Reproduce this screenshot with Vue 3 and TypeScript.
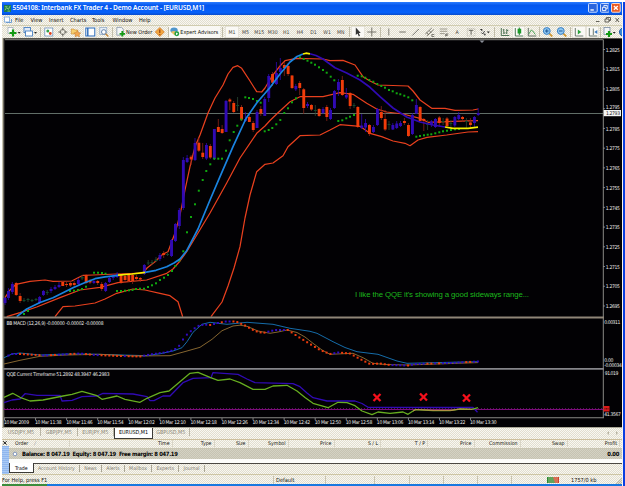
<script setup lang="ts">
type Pt = [number, number]

const menus = ['File', 'View', 'Insert', 'Charts', 'Tools', 'Window', 'Help']
const periods = ['M1', 'M5', 'M15', 'M30', 'H1', 'H4', 'D1', 'W1', 'MN']
const chartTabs = ['USDJPY,M5', 'GBPJPY,M5', 'EURJPY,M5', 'EURUSD,M1', 'GBPUSD,M5']
const terminalTabs = ['Trade', 'Account History', 'News', 'Alerts', 'Mailbox', 'Experts', 'Journal']
const columns = ['Time', 'Type', 'Size', 'Symbol', 'Price', 'S / L', 'T / P', 'Price', 'Commission', 'Swap', 'Profit']

// The 1.2795 label sits slightly higher so that it clears the current price box.
const prices = Array.from({ length: 14 }, (_, i) => ({
  y: 50 + i * 19.73,
  shift: i === 3 ? 0.2 : 1.7,
  label: (1.2825 - i * 0.001).toFixed(4),
}))
const times = ['10 Mar 2009', '11:38', '11:46', '11:54', '12:02', '12:10', '12:18', '12:26', '12:34', '12:42', '12:50', '12:58', '13:06', '13:14', '13:22', '13:30'].map(
  (t, i) => ({ x: 4 + i * 31.07, label: i ? '10 Mar ' + t : t }),
)

const upper = '5,297.7 10,290 16,284.3 30,281.3 45,280 53,281.3 71.7,281 78,277.7 83,275.3 93,275 116.7,274 143,273 147,268 155,261.7 163,254 168,251.7 175,233 180,215 185,190 190,166.7 195,146.7 200,135 208,113 215,98 223,85 228,74 233,67.3 237.7,65.7 241.7,68.3 250,81 256.7,91.7 261.7,92 265,88 271.7,76.7 280,66 285,60.7 296.7,58.3 323,59 330,60.7 343,60.3 355,65 363,76.7 370,81 378,85 408,86 413,91 420,100 431.7,108.3 445,108.3 455,110.3 473,110 478,109'
const middle = '6.7,316.7 20,312.7 36.7,307 60,297.7 80,290 100,287.3 118,282.7 146.7,280 166.7,273.3 173,269 180,261 186.7,251.7 198,233 210,213 226.7,183 240,158 256.7,133.3 265,126 270,120.5 278,112.7 290,101.7 300,96.7 323,96.7 340,92.7 353,94.3 366.7,103.3 376.7,109 386.7,112 403,114 420,118.3 428,122.3 453,121.3 478,120.7'
const lowerA = '55,316.7 63,306.7 75,306 95,303 105,299 116.7,293.3 133,289 145,290 160,293.3 170,295.7 178,301.7 182.7,316.7'
const lowerB = '211,316.7 222,302 228,286 234,268 240,246.7 245,218 250,195 256.7,171.7 265,164.3 273,163 283,155.7 288,146.7 300,135.7 320,135 330,130 340,124.7 360,126.3 370,133.3 381.7,136.7 393,141 405,143.3 410,145.7 418,140 427,137.3 446.7,135 468,132 478,131.7'

// x, body top, body bottom, direction (1 up, 0 down, 2 doji), wick top, wick bottom
const candles: number[][] = [
  [5, 298, 303, 1, 297, 305], [8.4, 291, 298, 1, 288, 300], [12.3, 284, 292, 1, 282, 294], [16.2, 283, 295, 0, 282, 296],
  [20.1, 296, 301, 0, 293, 303], [24, 300, 301, 2, 298, 302], [28, 299, 300, 2, 298, 302], [32, 300, 301, 2, 299, 302],
  [36, 299, 300, 2, 298, 301], [39.6, 297, 303, 1, 296, 304], [43.4, 291, 295, 1, 290, 296], [47.2, 292, 293, 2, 290, 295],
  [51, 289, 291, 1, 287, 293], [55, 287, 289, 1, 285, 290], [59, 285, 287, 1, 282, 288], [62.7, 282, 286, 0, 281, 286],
  [66.5, 284, 285, 0, 282, 287], [70.4, 283, 285.5, 0, 281, 287], [74.2, 283, 285, 0, 281, 287], [78.3, 280, 284, 1, 278, 285],
  [82.1, 277, 278.5, 2, 275, 280], [86.1, 275, 283, 0, 274, 284], [90, 281, 282.5, 0, 279, 284], [93.9, 281, 283, 1, 279, 284],
  [97.7, 281, 283, 0, 280, 285], [101.7, 284, 289, 0, 282, 291], [105.6, 283, 291, 1, 282, 292], [109.4, 278, 282, 1, 276, 283],
  [113.2, 276.5, 278, 1, 274, 280], [117.1, 274, 277, 1, 272, 278], [121, 275, 283, 0, 273, 284], [125, 276, 280, 0, 275, 283],
  [128.8, 275, 281, 0, 274, 282], [132.6, 275, 281, 0, 274, 284], [136.4, 277, 279, 0, 275, 281], [140.3, 278, 279.5, 0, 277, 282],
  [144.3, 265, 274, 1, 264, 275], [148.2, 262.5, 263.5, 2, 260, 265], [152, 262, 263, 2, 260, 265], [156, 259.5, 261, 2, 257, 262],
  [159.9, 255, 259, 1, 253, 261], [163.7, 253, 255, 0, 251, 258], [167.6, 254, 255, 2, 252, 256], [171.5, 240, 256, 1, 239, 257],
  [175.4, 224, 241, 1, 223, 242], [179.3, 210, 226, 1, 208, 229], [183.3, 160, 208, 1, 157, 210], [187.1, 158, 162, 1, 155, 163],
  [191.1, 156.7, 159.5, 0, 155, 165], [195, 143, 160, 1, 138, 161], [198.8, 142.7, 150.7, 0, 138, 152], [202.7, 152.7, 157, 0, 143, 159],
  [206.4, 145, 158.5, 1, 143, 160], [210.3, 146, 157.5, 0, 144, 159], [214.3, 129, 159, 1, 129, 160], [218.3, 127, 132, 0, 119, 132],
  [222.1, 129, 133, 0, 125, 134], [226, 101, 132, 1, 100, 132], [229.8, 99.5, 101.5, 0, 98, 110], [233.7, 103, 112, 0, 101, 113],
  [237.6, 105, 106, 2, 97, 111], [241.5, 107, 119.5, 0, 105, 121], [245.4, 119, 121, 1, 112, 122], [249.3, 117, 122, 0, 114, 122],
  [253.2, 123, 130, 0, 121, 132], [257, 112, 128, 1, 110, 128], [260.8, 109, 113.5, 0, 106, 116], [264.7, 99, 116, 1, 97, 116],
  [268.7, 76, 98, 1, 74, 102], [272.5, 74, 82.7, 0, 72, 86], [276.4, 73, 84, 1, 62, 85], [280.3, 68, 72, 1, 58, 80],
  [284.3, 65, 68, 0, 62, 76], [288.1, 66, 74, 0, 63, 76], [292, 75.5, 88, 0, 75, 89], [295.8, 86, 89.3, 1, 84, 91],
  [299.7, 83, 88, 0, 81, 95], [303.7, 89.3, 108, 0, 88, 114], [307.5, 104, 106, 1, 102, 108], [311.4, 105, 109.5, 0, 104, 111],
  [315.3, 110, 111, 2, 105, 116], [319.1, 109, 116, 0, 108, 117], [323, 109, 113, 1, 107, 114], [326.8, 107, 117, 0, 105, 121],
  [330.5, 110, 119, 1, 108, 120], [334.4, 91, 108, 1, 90, 109], [338.4, 82, 90, 1, 79, 96], [342.3, 80, 95, 0, 76, 96],
  [346.3, 95, 97.5, 1, 88, 99], [350.1, 93, 106, 0, 92, 109], [354, 105, 106, 2, 103, 108], [357.8, 107, 127, 0, 106, 128],
  [361.7, 125.5, 128, 1, 114, 129], [365.5, 123, 127.5, 1, 119, 132], [369.4, 125, 134, 0, 124, 136], [373.4, 127, 132, 1, 125, 133],
  [377.4, 109, 125, 1, 108, 126], [381.3, 112, 118, 0, 106, 120], [385.1, 119, 129.5, 0, 110, 131], [389, 124, 125, 2, 121, 130],
  [392.8, 125, 129.5, 1, 123, 130], [396.7, 123.5, 128, 1, 121, 129], [400.5, 123, 126, 1, 121, 127], [404.4, 121, 123, 0, 118, 125],
  [408.4, 125, 136, 0, 123, 137], [412.4, 115, 134, 1, 113, 135], [416.3, 105, 113.5, 1, 99, 114], [420.1, 107, 121, 0, 106, 121],
  [423.8, 119, 121, 0, 118, 131], [427.6, 124, 125, 2, 120, 130], [431.4, 121.5, 125, 1, 120, 127], [435.4, 119, 127, 1, 118, 128],
  [439.3, 117.5, 123, 0, 116, 127], [443.1, 121, 122, 2, 118, 125], [447, 118.5, 126, 0, 117, 127], [450.9, 123, 124, 2, 120, 129],
  [454.8, 117, 125.5, 1, 116, 127], [458.7, 115, 119, 1, 112, 120], [462.5, 117, 119, 0, 116, 122], [466.4, 121, 122, 2, 118, 129],
  [470.4, 122.5, 125, 0, 118, 128], [474.4, 117, 123, 1, 116, 128], [478.2, 113, 115, 1, 108, 116],
]
const palette = ['#f03c0a', '#300ab4', '#0e4a2c']
const wickPalette = ['#8a2418', '#300ab4', '#2c4a34']

const sar: Pt[] = [
  [24, 314], [28, 311], [70, 291], [74, 290.7], [78, 290], [82, 289], [86, 286.7], [94, 272.7], [98, 272.7], [102, 273], [105.5, 273.7],
  [117, 291], [121, 291], [125, 290.7], [129, 290.3], [132.5, 290], [136, 289], [140, 288.7], [144, 288.7], [148, 287], [152, 285.3],
  [156, 283.3], [160, 280], [164, 277.7], [168, 275], [172, 271], [175.3, 266], [179.3, 260.7], [183.3, 251.3], [187, 232.3], [191, 217],
  [195, 204.3], [198.8, 190.7], [202.7, 180], [206.3, 171], [210.3, 164.3], [214.3, 158.7], [218.3, 158.7], [222, 158.7], [226, 150.7],
  [229.7, 140.3], [233.7, 132], [237.3, 125.7], [241.3, 119.5], [245.3, 97.3], [249, 98], [253, 99], [257, 101], [260.7, 102.7],
  [264.7, 131.3], [268.7, 130], [272.3, 128], [276.3, 124.3], [280.3, 120], [284.3, 113], [288, 108.3], [292, 102.3], [296, 98.3],
  [300, 57.3], [303.7, 59], [307.5, 60.7], [311.3, 62.7], [315, 64.7], [319, 67.3], [323, 70], [326.7, 72.7], [330.7, 76.7], [334.3, 80.3],
  [338.3, 121], [342.3, 120.3], [346.3, 118.3], [350, 116.7], [354, 115], [357.7, 75.7], [361.7, 76.3], [365.3, 77.7], [369.3, 80],
  [373.3, 81.7], [377.3, 84], [381.3, 86], [385, 87.7], [389, 90], [392.7, 91.3], [396.7, 93.3], [400.3, 94.3], [404.3, 95.7], [408.3, 97.3],
  [412.3, 100.3], [416.3, 136.7], [420, 136], [424, 135.3], [427.7, 134.7], [431.3, 134.3], [435.3, 133.3], [439.3, 132.3], [443, 131.3],
  [447, 130.7], [451, 130], [455, 129.3], [459, 129],
]

const macdPath: Pt[] = [
  [5, 357], [12, 354], [20, 354], [45, 355.5], [80, 353.5], [95, 355], [120, 356], [140, 356.5], [150, 354.5], [165, 352.5], [174, 350],
  [179, 346], [183, 339.5], [187, 334.5], [191, 331], [195, 328], [198, 326], [204, 324.5], [210, 325], [218, 323], [226, 321.5],
  [236, 321.5], [245, 325.5], [255, 331], [263, 333], [275, 330], [288, 330], [297, 336], [310, 344], [320, 350], [330, 354],
  [338, 352.5], [350, 353.5], [360, 359], [370, 364], [380, 363.5], [390, 365], [408, 365.5], [416, 364], [450, 363], [478, 361.5],
]
const redSpans: Pt[] = [[18, 40], [48, 56], [67, 77], [84, 90], [98, 124], [127, 141], [207, 213], [220, 224], [231, 266], [286, 332], [339, 392], [406, 410], [425, 434], [438, 442], [463, 471]]
const macdAt = (x: number): number => {
  const i = Math.max(1, macdPath.findIndex((p) => p[0] >= x))
  const [a, b] = [macdPath[i - 1], macdPath[i]]
  return a[1] + ((b[1] - a[1]) * (x - a[0])) / (b[0] - a[0])
}
const macdDots = Array.from({ length: 122 }, (_, i) => {
  const x = 8.4 + i * 3.88
  return { x, y: macdAt(x), down: redSpans.some(([a, b]) => x >= a && x <= b) }
})

const crosses: Pt[] = [[377, 397.5], [423.5, 397], [466.5, 398]]
</script>

<template>
  <div class="window">
    <header class="title">
      <svg class="logo" viewBox="0 0 8 8"><rect width="8" height="8" fill="#1c7c4c" /><path d="M1 6L3 3L5 5L7 1M1 2H4M4 7H7" stroke="#8fd08a" fill="none" /></svg>
      <span class="caption">5504108: Interbank FX Trader 4 - Demo Account - [EURUSD,M1]</span>
      <span class="winbtns">
        <svg viewBox="0 0 10 10"><rect x=".5" y=".5" width="9" height="9" rx="1" fill="#2b66dd" stroke="#cfe0ff" /><path d="M2.5 7.2H6" stroke="#fff" stroke-width="1.4" /></svg>
        <svg viewBox="0 0 10 10"><rect x=".5" y=".5" width="9" height="9" rx="1" fill="#2b66dd" stroke="#cfe0ff" /><path d="M4 4V2.5H7.5V6H6M2.5 4.5H6V7.8H2.5Z" stroke="#fff" stroke-width=".9" fill="none" /></svg>
        <svg viewBox="0 0 10 10"><rect x=".5" y=".5" width="9" height="9" rx="1" fill="#ea5a24" stroke="#ffe0d0" /><path d="M3 3L7 7M7 3L3 7" stroke="#fff" stroke-width="1.4" /></svg>
      </span>
    </header>

    <nav class="menu">
      <svg class="docicon" viewBox="0 0 8 8"><rect x=".5" y="1" width="5" height="5" fill="#fff" stroke="#8fb4de" /><path d="M2 6.5H7.5V3" stroke="#6b9bd0" fill="none" /></svg>
      <span v-for="m in menus" :key="m">{{ m }}</span>
      <svg class="mdi" viewBox="0 0 28 8" stroke="#55534c" fill="none"><path d="M2 5.5H5.5M11 3H15V6H11ZM12.5 3V1.5H16.5V4.5H15M21.5 2L25 6M25 2L21.5 6" stroke-width=".9" /></svg>
    </nav>

    <div class="toolbar">
      <svg class="wide" viewBox="0 0 16 12"><rect x="2" y="1.5" width="5" height="6" fill="#fff" stroke="#9aa7b5" stroke-width=".7" /><path d="M7 3.5V10.5M3.5 7H10.5" stroke="#149a14" stroke-width="2.2" /><path d="M11.7 6H14.7L13.2 7.7Z" fill="#222" /></svg>
      <svg class="wide" viewBox="0 0 16 12"><rect x="2" y="1.5" width="6.5" height="5" fill="#dfeaf7" stroke="#4a80c0" stroke-width=".9" /><rect x="3.5" y="5" width="7" height="5" fill="#fff" stroke="#4a80c0" stroke-width=".9" /><path d="M12 6H15L13.5 7.7Z" fill="#222" /></svg>
      <i class="sep s4" />
      <svg viewBox="0 0 12 12"><rect x="2" y="2" width="8" height="8" fill="#fff" stroke="#6f93bd" stroke-width=".8" /><circle cx="5" cy="5" r="1.5" fill="#38a048" /><circle cx="7.5" cy="7.5" r="1.4" fill="#e0421c" /></svg>
      <svg viewBox="0 0 12 12"><circle cx="6" cy="6" r="2.6" stroke="#7c7b70" fill="none" stroke-width=".9" /><path d="M6 1.5V4.5M6 7.5V10.5M1.5 6H4.5M7.5 6H10.5" stroke="#5c5b54" stroke-width=".9" /></svg>
      <svg viewBox="0 0 12 12"><path d="M1.5 3H4L5 4H8V8H1.5Z" fill="#f7d070" stroke="#c88a30" stroke-width=".6" /><path d="M7.5 4.5L8.6 6.6L11 7L9.3 8.6L9.7 11L7.5 9.8L5.3 11L5.7 8.6L4 7L6.4 6.6Z" fill="#f4a850" stroke="#c07830" stroke-width=".5" /></svg>
      <svg class="on" viewBox="0 0 12 12"><rect x="2" y="2" width="9" height="8" fill="#fff" stroke="#2868b8" /><path d="M4 2V10" stroke="#2868b8" stroke-width="1.4" /></svg>
      <svg viewBox="0 0 12 12"><rect x="2" y="1.5" width="7" height="7" fill="#e4edf7" stroke="#8ea7c4" stroke-width=".7" /><circle cx="6" cy="6" r="2.3" fill="#fff" stroke="#6482a8" /><path d="M7.8 7.8L10.5 10.5" stroke="#c98a3c" stroke-width="1.4" /></svg>
      <i class="sep s5" />
      <span class="order"><svg viewBox="0 0 12 12"><path d="M2 1.5H7L9 3.5V10H2Z" fill="#f4f6f8" stroke="#7b8da4" stroke-width=".8" /><path d="M8 5.5V11.5M5 8.5H11" stroke="#149a14" stroke-width="2" /></svg>New Order</span>
      <svg viewBox="0 0 12 12"><path d="M6 1.5L10.5 6L6 10.5L1.5 6Z" fill="#f2a640" stroke="#cf7420" stroke-width=".7" /><path d="M6 3.5V7M6 8V9" stroke="#8b3a0c" stroke-width="1.1" /></svg>
      <i class="sep s2" />
      <span class="advisor"><svg viewBox="0 0 12 12"><ellipse cx="5.5" cy="4.5" rx="4" ry="3" fill="#4f96cc" /><path d="M2 6.5Q6 4 9 7L6 10Z" fill="#e8c060" /><circle cx="8.5" cy="8.5" r="2.7" fill="#20a040" /><path d="M7.7 7V10L10 8.5Z" fill="#fff" /></svg>Expert Advisors</span>
      <i class="sep s5" />
      <span v-for="(p, i) in periods" :key="p" class="period" :class="{ on: i === 0 }">{{ p }}</span>
      <i class="sep s3" />
      <svg class="on" viewBox="0 0 12 12"><path d="M4 1.5V9L5.8 7.5L7 10.5L8.2 9.8L7 7H9Z" fill="#333" /></svg>
      <svg viewBox="0 0 12 12"><path d="M6 1.5V10.5M1.5 6H10.5" stroke="#69685f" stroke-width=".9" /></svg>
      <i class="sep s4b" />
      <svg viewBox="0 0 12 12"><path d="M6 2.5V9.5" stroke="#77766c" stroke-width=".9" /></svg>
      <svg viewBox="0 0 12 12"><path d="M2.5 6H9" stroke="#66655c" stroke-width=".9" /></svg>
      <svg viewBox="0 0 12 12"><path d="M2.5 9.5L9 3" stroke="#66655c" stroke-width=".9" /></svg>
      <svg viewBox="0 0 12 12"><path d="M1.5 8L8 2M3 10L10 3.5M3 6.5L5 9M5.5 4.5L7.5 7M8 8.5H10.5M8 10.5H10.5M8 8.5V10.5" stroke="#66655c" stroke-width=".8" fill="none" /></svg>
      <svg viewBox="0 0 12 12"><path d="M2 3H9.5M2 5.3H9.5M2 7.6H7" stroke="#8a887b" stroke-width=".8" /><path d="M8 8H10.5M8 8V10.5M8 9.3H10" stroke="#55534c" stroke-width=".8" /></svg>
      <span class="glyph">A</span>
      <svg viewBox="0 0 12 12"><rect x="2.5" y="2.5" width="7.5" height="7.5" fill="none" stroke="#a6a497" stroke-width=".7" stroke-dasharray="1 1" /><path d="M4 4.3H8.5M6.3 4.3V8.7" stroke="#55534c" stroke-width=".9" /></svg>
      <svg viewBox="0 0 12 12"><path d="M2 3H4.5V5.5Z" fill="#333" /><path d="M3.5 6.5L5 8L6.8 5" stroke="#333" stroke-width=".9" fill="none" /><circle cx="7" cy="8.5" r="1" fill="#555" /><path d="M9 5.5H12L10.5 7.2Z" fill="#222" /></svg>
      <i class="sep s7" />
      <svg viewBox="0 0 12 12"><path d="M2.5 2V9.5H10.5M5 3V8M4 4H5M5 7H6.5M8 3V8M8 4.5H9.5M7 7H8" stroke="#3f6a48" stroke-width=".9" fill="none" /></svg>
      <svg class="on" viewBox="0 0 12 12"><path d="M2.5 2V10H10.5" stroke="#3f6a48" stroke-width=".9" fill="none" /><path d="M6.5 1.5V9" stroke="#146e1c" stroke-width=".9" /><rect x="4.8" y="2.7" width="3.6" height="4.8" fill="#1c9a28" /></svg>
      <svg viewBox="0 0 12 12"><path d="M2.5 2V10H10.5" stroke="#55645a" stroke-width=".9" fill="none" /><path d="M3 8L5.5 4L7 5L9.5 8.5" stroke="#3c9a48" stroke-width=".9" fill="none" /></svg>
      <i class="sep s2" />
      <svg viewBox="0 0 12 12"><path d="M7.3 7.3L10.5 10.5" stroke="#cf9a38" stroke-width="1.8" /><circle cx="5" cy="5" r="3.4" fill="#8fc8f2" stroke="#3a80c4" /><path d="M5 3.2V6.8M3.2 5H6.8" stroke="#124c8c" stroke-width=".9" /></svg>
      <svg viewBox="0 0 12 12"><path d="M7.3 7.3L10.5 10.5" stroke="#cf9a38" stroke-width="1.8" /><circle cx="5" cy="5" r="3.4" fill="#8fc8f2" stroke="#3a80c4" /><path d="M3.2 5H6.8" stroke="#124c8c" stroke-width=".9" /></svg>
      <i class="sep s4b" />
      <svg class="on" viewBox="0 0 12 12"><path d="M2.5 2V10H10.5" stroke="#5d6c62" stroke-width=".9" fill="none" /><path d="M5 3.5V8.5L8.5 6Z" fill="#2ba23a" /></svg>
      <svg class="on" viewBox="0 0 12 12"><path d="M2.5 2V10H10.5M6.5 2.5V9" stroke="#5d6c62" stroke-width=".9" fill="none" /><path d="M10.5 4V8L7.5 6Z" fill="#3d7cc0" /></svg>
      <i class="sep s1" />
      <svg class="wide" viewBox="0 0 16 12"><rect x="3" y="1.5" width="6" height="7" fill="#f4f6f8" stroke="#7b8da4" stroke-width=".8" /><path d="M8 5V11M5 8H11" stroke="#149a14" stroke-width="2.2" /><path d="M11.7 6H14.7L13.2 7.7Z" fill="#222" /></svg>
      <svg viewBox="0 0 12 12"><circle cx="6" cy="6" r="4.3" fill="#3b8ad8" stroke="#1c5ca4" /></svg>
    </div>

    <main class="chart">
      <svg viewBox="2 38 620 389" width="620" height="389">
        <rect x="2" y="38" width="620" height="389" fill="#020104" />
        <path d="M2 38.4H622" stroke="#6c6a60" stroke-width=".9" />
        <path d="M2.5 38V427" stroke="#c9c5b3" />
        <path d="M3.7 38V427" stroke="#77746a" stroke-width="1.2" />
        <path d="M5 39.7H603.3V417.7" stroke="#8a8a86" stroke-width="1" fill="none" />
        <path d="M479.5 40.5H484.5L482 43Z" fill="#8b8f99" />

        <path d="M5 113.5H603" stroke="#6c7a74" stroke-width=".9" />

        <g fill="none" stroke="#e8401e" stroke-width="1.25" stroke-linejoin="round">
          <polyline :points="upper" />
          <polyline :points="middle" />
          <polyline :points="lowerA" />
          <polyline :points="lowerB" />
        </g>

        <g v-for="(c, i) in candles" :key="i">
          <line :x1="c[0]" :x2="c[0]" :y1="c[4]" :y2="c[5]" :stroke="wickPalette[c[3]]" stroke-width=".8" />
          <rect :x="c[0] - 1.4" :y="c[1]" width="2.9" :height="c[2] - c[1]" :fill="palette[c[3]]" />
        </g>

        <g fill="#10a80f"><rect v-for="(d, i) in sar" :key="i" :x="d[0] - 1" :y="d[1] - 1" width="2" height="2" /></g>

        <g fill="none" stroke-width="1.7" stroke-linejoin="round">
          <polyline stroke="#1a84e0" points="16.7,316.7 26.7,309 40,302.5 53,297.7 73,287.7 84,283 95,278.7 105,276.8 118,275.3" />
          <polyline stroke="#f6f000" points="118,275.2 132,274 145,272.3" />
          <polyline stroke="#1a84e0" points="145,272.3 156,270.3 166.7,266.7 174,263 180,259 186.7,250.7 198,229 210,200 220,176.7 233,146.7 246,118.5 256.7,103 270,87.5 280,74 290,62 297,56.5 303,54" />
          <polyline stroke="#f6f000" points="303,54 306,53.2 310,53.8" />
          <polyline stroke="#300ab4" points="310,53.8 316,55.5 323,59 335,67.7 346.7,73 360,80 370,87.3 380,96.7 393,108 406.7,117 420,122 433,125 445,127" />
          <polyline stroke="#f6f000" points="445,127 453,128.3 468,128.3 478,127.2" />
        </g>

        <text x="355" y="297.3" textLength="174" fill="#1cb81c" class="note">I like the QQE it's showing a good sideways range...</text>

        <path d="M3 317.6H604" stroke="#8f8678" stroke-width="2" />
        <path d="M3 368.9H604" stroke="#85858a" stroke-width="1.8" />
        <path d="M4 417.8H604" stroke="#8a8a86" stroke-width="1.1" />

        <g fill="none" stroke-width=".9">
          <polyline stroke="#1778bc" points="4,357.7 12,354 20,353 40,355 67,354 87,354 133,355.3 147,355.7 160,353.7 173,351 182,347.7 187,341.7 193,332.3 202,324.3 210,322.3 227,324.3 247,322.3 273,324.3 290,328.3 310,331.3 317,333.3 333,341.7 345,347.5 357,351.7 378,354.3 397,361 407,363.3 433,362.7 478,361.7" />
          <polyline stroke="#947034" points="4,364 20,360.3 40,356.3 67,355 100,354.3 133,356 170,355.7 187,351 200,347.3 212,339.3 222,330.7 233,326 240,325.2 247,326.3 258,331 270,333.3 278,332 287,330 297,332.5 305,337 313,343.3 322,350 330,354.3 353,353.3 363,357.7 373,363.3 385,364.5 407,365 478,362.6" />
        </g>
        <rect v-for="d in macdDots" :key="d.x" :x="d.x - 1" :y="d.y - 1" width="2" height="2" :fill="d.down ? '#ee3a0c' : '#300ac4'" />

        <path d="M4 408.5H603" stroke="#7a1a78" stroke-width=".7" stroke-dasharray="1 2" />
        <path d="M4 409.5H603" stroke="#7c0c7c" stroke-width="1.1" />
        <g fill="none" stroke-width="1.3" stroke-linejoin="round">
          <polyline stroke="#300ab4" points="4,402.7 12,400 20,399 25,393.7 37,395.3 60,395.3 62,401 72,400.3 82,396.7 97,396 103,393.3 133,394 147,396.7 150,400.7 154,400.7 163,396 170,396 183,382.7 193,378.3 211,377.7 213,372.6 238,374.3 247,379 255,382.7 293,383.7 300,386.7 307,393 313,397.7 327,401 355,401 362,403.5 368,407.3 473,407.5 477.5,412.3" />
          <polyline stroke="#67ae20" points="4,397.3 12.7,393.3 20,397.3 30,401 43,400 63,396 72,394.3 82,391.3 97,395.7 102,399.3 117,396 125,399.3 140,402.3 147,398.3 160,392.7 169,391 182,380 190,373.3 198,372.3 210,377.3 218,380.3 230,379 240,382.7 253,389.3 265,389.3 273,386 287,385.3 297,391 305,397.5 313,403.3 328,407.7 338,402.3 347,402.7 355,405.7 362,411 372,414.7 378,412 390,413.3 403,412 408,414.3 415,409.7 433,410.7 450,410.7 460,409 472,409.3 478,407.7" />
          <polyline stroke="#c08a4c" stroke-width="1" points="413,411 416,409.6 433,410.3 452,410.3 460,409 472,409.3" />
        </g>
        <path v-for="(c, i) in crosses" :key="i" :d="`M${c[0] - 2.7} ${c[1] - 2.7}l5.4 5.4m0 -5.4l-5.4 5.4`" stroke="#f5101c" stroke-width="2.3" stroke-linecap="square" />

        <g class="axis">
          <text x="6.5" y="324.9" textLength="97">BB MACD (12,26,9) -0.00000 -0.00002 -0.00008</text>
          <text x="6.5" y="376.2" textLength="103">QQE Current Timeframe 51.2892 48.3947 46.2983</text>
          <g v-for="p in prices" :key="p.label">
            <path :d="`M603 ${p.y - 0.5}h2`" stroke="#999" stroke-width=".8" />
            <text x="605.8" :y="p.y + p.shift" textLength="14">{{ p.label }}</text>
          </g>
          <rect x="603.7" y="110" width="17.3" height="6.2" fill="#f4f4f4" />
          <text x="606" y="115.1" textLength="14" class="now">1.2793</text>
          <text x="604.3" y="323.5" textLength="16">0.00311</text>
          <text x="604.3" y="362" textLength="9">0.00</text>
          <text x="604.3" y="367" textLength="17.5">-0.00034</text>
          <text x="604.8" y="375" textLength="13.5">91.019</text>
          <text x="604.3" y="415.8" textLength="16.5">41.3567</text>
          <rect x="603.5" y="406" width="6" height="5.5" fill="#dd1818" />
          <path d="M604.5 408.8H608.5" stroke="#6c1010" stroke-width="1.4" stroke-dasharray="1 .5" />
          <g v-for="t in times" :key="t.x">
            <path :d="`M${t.x + 0.5} 418v2`" stroke="#999" stroke-width=".8" />
            <text :x="t.x" y="423.8" :textLength="t.x > 5 ? 26.5 : 25">{{ t.label }}</text>
          </g>
        </g>
      </svg>
    </main>

    <nav class="charttabs">
      <span v-for="t in chartTabs" :key="t" :class="{ active: t === 'EURUSD,M1' }">{{ t }}</span>
      <svg viewBox="0 0 14 6"><path d="M3 1L1 3L3 5ZM10 1L12 3L10 5Z" fill="#b8b4a2" /></svg>
    </nav>

    <section class="terminal">
      <aside><svg viewBox="0 0 6 6"><path d="M1.2 1.2L4.6 4.6M4.6 1.2L1.2 4.6" stroke="#222" /></svg><i /></aside>
      <div class="panel">
        <div class="thead">
          <span class="first">Order<em>/</em></span>
          <span v-for="(c, i) in columns" :key="i">{{ c }}</span>
        </div>
        <div class="balance"><svg viewBox="0 0 6 6"><circle cx="3" cy="3" r="1.8" fill="#fff" stroke="#6f87b8" stroke-width=".8" /></svg><b>Balance: 8 047.19&nbsp; Equity: 8 047.19&nbsp; Free margin: 8 047.19</b><b class="sum">0.00</b></div>
        <div class="blank" />
        <div class="ttabs"><span v-for="(t, i) in terminalTabs" :key="t" :class="{ active: i === 0 }">{{ t }}</span></div>
      </div>
    </section>

    <footer class="status">
      <span class="help">For Help, press F1</span>
      <span class="profile">Default</span>
      <span /><span /><span /><span /><span />
      <span class="link"><svg viewBox="0 0 12 6"><rect width="12" height="6" fill="#2c8a34" /><path d="M6 0H12V6H8Z" fill="#d0402c" /><path d="M2 0V6M4 0V6M6 0V6M8 0V6M10 0V6" stroke="#e6dfb8" stroke-width=".6" /></svg>1757/0 kb</span>
      <svg class="grip" viewBox="0 0 7 7"><path d="M1 7L7 1M3 7L7 3M5 7L7 5" stroke="#aaa692" stroke-width=".8" /></svg>
    </footer>
    <div class="taskbar"><i /></div>
  </div>
</template>

<style>
body { margin: 0; overflow: hidden; background: #fff; }
</style>

<style scoped>
.window {
  --dither: repeating-conic-gradient(#e2dece 0 25%, #f8f7f2 0 50%) 0 0 / 2px 2px;
  box-sizing: border-box;
  width: 625px;
  height: 486px;
  display: flex;
  flex-direction: column;
  padding: 2px 2px 0 2px;
  overflow: hidden;
  background: linear-gradient(90deg, #fff 0 2px, #f5f4ef 2px 622.6px, #0a3fe0 622.6px) 0 2px no-repeat #fff;
  font-family: "DejaVu Sans Condensed", "Liberation Sans", sans-serif;
  font-size: 5.6px;
  line-height: 8px;
  color: #16150f;
  white-space: nowrap;
}
.window > * { flex: none; box-sizing: border-box; width: 620px; }
svg { display: block; flex: none; }

.title { height: 12.5px; display: flex; align-items: center; background: linear-gradient(#2a7cff, #0557ee 25%, #0560fa 80%, #0a4ccc); color: #fff; }
.logo { width: 7px; height: 7px; margin-left: 1.5px; }
.caption { margin-left: 2px; font: 600 6.6px/12px "Noto Sans", sans-serif; letter-spacing: -0.14px; }
.winbtns { margin-left: auto; display: flex; gap: 2px; padding-right: 1px; }
.winbtns svg { width: 9.7px; height: 9.7px; }

.menu { height: 10px; display: grid; grid-template-columns: 13px 15.5px 18.5px 21px 22px 20.5px 26.5px 1fr 28px; align-items: center; background: var(--dither); }
.docicon { width: 8px; height: 8px; margin-left: 2px; }
.mdi { width: 28px; height: 8px; grid-column: 9; }

.toolbar { height: 13.5px; display: flex; align-items: center; padding-left: 4px; overflow: hidden; background: var(--dither); border-top: 1px solid #d0ccb0; }
.toolbar > svg { width: 13.6px; height: 12px; }
.toolbar > svg.wide { width: 16px; }
.on { background: #faf9f5; box-shadow: inset 0 0 0 0.5px #d4d0c0; }
.sep { flex: none; height: 10px; background: linear-gradient(#c2beaa, #c2beaa) center / 1px 100% no-repeat; }
.s1 { width: 1.6px; } .s2 { width: 2.3px; } .s3 { width: 3.6px; } .s4 { width: 4.2px; } .s4b { width: 4px; } .s5 { width: 4.8px; } .s7 { width: 7px; }
.order, .advisor { display: flex; align-items: center; flex: none; box-sizing: border-box; }
.order { width: 38.5px; font-size: 5.5px; }
.order svg, .advisor svg { width: 11px; height: 11px; }
.advisor { width: 51px; height: 12px; background: #f9f8f4; font-size: 5.4px; }
.period, .glyph { flex: none; width: 13.6px; height: 12px; line-height: 12px; text-align: center; font-size: 5.2px; color: #4a483f; }

.chart { height: 389px; }
.chart svg text { font-family: "DejaVu Sans Condensed", sans-serif; }
.axis text { font-size: 5px; fill: #ececea; }
.axis text.now { fill: #222; }
.chart svg text.note { font-family: "Liberation Sans", sans-serif; font-size: 7.8px; }

.charttabs { height: 11.5px; display: flex; align-items: flex-start; background: var(--dither); border-top: 1px solid #aaa797; color: #8d897a; }
.charttabs span { box-sizing: border-box; width: 36.5px; height: 8px; line-height: 8px; font-size: 5.4px; text-align: center; border-right: 1px solid #b9b5a4; }
.charttabs span:first-child { width: 39px; }
.charttabs span.active { width: 39px; height: 10.5px; background: #fff; color: #000; border: solid #3c3b36; border-width: 0 1px 1px; }
.charttabs svg { width: 14px; height: 6px; margin: 2px 2px 0 auto; }

.terminal { height: 35.5px; display: flex; border-top: 1px solid #cdbf9c; background: var(--dither); }
.terminal aside { width: 7px; display: flex; flex-direction: column; }
.terminal aside svg { width: 6px; height: 6px; }
.terminal aside i { flex: 1; background: repeating-linear-gradient(#8fb6ee 0 1px, #a9c9f4 1px 2px); }
.panel { flex: 1; display: flex; flex-direction: column; }
.thead { height: 9.5px; display: grid; grid-template-columns: 61px 102.5px 42px 34px 40px 46px 46.5px 47px 46.5px 46px 47px 52.5px; align-items: center; box-sizing: border-box; border-bottom: 1px solid #c9c5b2; }
.thead span { text-align: right; padding-right: 2px; border-right: 1px solid #d9d5c6; box-sizing: border-box; line-height: 7px; font-size: 5.2px; }
.thead .first { text-align: left; padding-left: 6px; }
.thead em { margin-left: 6px; color: #999; }
.balance { height: 9.5px; display: flex; align-items: center; padding: 0 3px 0 3px; background: repeating-conic-gradient(#c6c3b2 0 25%, #d4d2c4 0 50%) 0 0 / 2px 2px; font-size: 5.8px; letter-spacing: -0.3px; color: #000; }
.balance svg { width: 6px; height: 6px; margin-right: 4px; }
.sum { margin-left: auto; }
.blank { height: 4px; background: #fdfdfb; }
.ttabs { flex: 1; display: flex; border-top: 1px solid #4b4943; color: #858174; }
.ttabs span { height: 7px; line-height: 7px; margin-top: 1px; padding: 0 4.2px; border-right: 1px solid #aaa695; font-size: 5.2px; }
.ttabs span.active { margin-top: -1px; height: 9.5px; line-height: 10px; padding: 0 5px; background: #fff; color: #000; border: solid #3c3b36; border-width: 0 1px 1px; }

.status { height: 10px; display: grid; grid-template-columns: 272px 52px 49px 35px 34px 34px 34px 1fr 7px; align-items: center; background: var(--dither); border-top: 1px solid #cdc5a4; }
.status span { height: 8px; line-height: 8px; border-right: 1px solid #c9c4b0; box-sizing: border-box; }
.status .profile { padding-left: 2px; }
.status .link { display: flex; align-items: center; gap: 12px; padding-left: 35px; border: 0; }
.link svg { width: 12px; height: 6px; }
.grip { width: 7px; height: 7px; align-self: end; }
.taskbar { flex: 1 1 auto; background: #1878e0; }
.taskbar i { display: block; width: 45px; height: 100%; background: #3c8c3c; }
</style>
